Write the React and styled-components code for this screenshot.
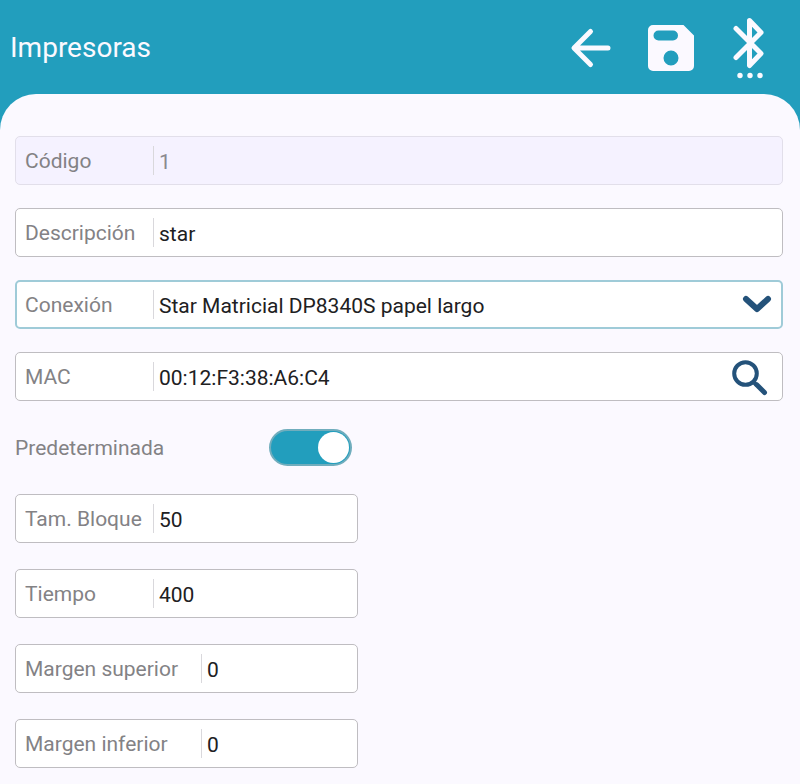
import React, { useState } from "react";
import styled, { createGlobalStyle } from "styled-components";

const GlobalStyle = createGlobalStyle`
  * {
    box-sizing: border-box;
  }

  body {
    margin: 0;
    background: #229ebd;
    font-family: Roboto, "Liberation Sans", sans-serif;
  }
`;

const Page = styled.div`
  min-height: 100vh;
  display: flex;
  flex-direction: column;
`;

const Header = styled.header`
  height: 94px;
  padding: 2px 34px 0 10px;
  display: flex;
  align-items: center;
  justify-content: space-between;
  color: #fbf9ff;
`;

const Title = styled.h1`
  margin: 0;
  font-size: 28px;
  font-weight: 400;
  line-height: 32px;
`;

const Actions = styled.div`
  display: flex;
  align-items: center;
  gap: 36px;
`;

const IconButton = styled.button`
  display: flex;
  padding: 0;
  border: none;
  background: none;
  color: inherit;
  cursor: pointer;

  svg {
    display: block;
  }
`;

const Panel = styled.form`
  flex: 1;
  display: flex;
  flex-direction: column;
  gap: 23px;
  padding: 42px 17px 16px 15px;
  border-radius: 36px 36px 0 0;
  background: #fbf9ff;
`;

const FieldBox = styled.div`
  height: 49px;
  display: flex;
  align-items: center;
  padding-right: ${(props) => (props.$end || 8)}px;
  border: 2px solid ${(props) => (props.$active ? "#9fcbd8" : "#bfbdc1")};
  border-width: ${(props) => (props.$active ? "2px" : "1px")};
  padding-left: ${(props) => (props.$active ? "8px" : "9px")};
  border-radius: 5px;
  background: #fff;

  ${(props) => props.$disabled && `
    border-color: #e2dfea;
    background: #f5f2ff;
  `}
`;

const Label = styled.label`
  flex: none;
  width: ${(props) => (props.$wide ? "176px" : "128px")};
  color: #838285;
  font-size: 21px;
  line-height: 28px;
  white-space: nowrap;
`;

const Input = styled.input`
  flex: 1;
  min-width: 0;
  height: 29px;
  padding: 2px 0 0 5px;
  border: none;
  border-left: 1px solid #d9d8dc;
  border-radius: 0;
  outline: none;
  background: transparent;
  color: #202022;
  font: 400 21px Roboto, "Liberation Sans", sans-serif;

  &:disabled {
    color: #8b898f;
  }
`;

const Select = styled(Input).attrs({ as: "select" })`
  appearance: none;
`;

const Chevron = styled.svg`
  flex: none;
  pointer-events: none;
`;

const SwitchRow = styled.div`
  display: flex;
  align-items: center;
  height: 47px;
`;

const SwitchLabel = styled(Label)`
  width: 254px;
`;

const Switch = styled.input`
  appearance: none;
  display: flex;
  align-items: center;
  justify-content: ${(props) => (props.checked ? "flex-end" : "flex-start")};
  width: 83px;
  height: 37px;
  margin: 0;
  padding: 0 1px;
  border: 2px solid #70adbd;
  border-radius: 19px;
  background: ${(props) => (props.checked ? "#229ebd" : "#c9c7cb")};
  cursor: pointer;

  &::before {
    content: "";
    width: 31px;
    height: 31px;
    border-radius: 50%;
    background: #fff;
  }
`;

const Settings = styled.div`
  display: grid;
  grid-template-columns: minmax(0, 1fr) minmax(0, 1fr);
  column-gap: 82px;
  row-gap: 26px;

  > * {
    grid-column: 1;
  }
`;

const BackIcon = () => (
  <svg width="42" height="42" viewBox="0 0 42 42" fill="none" stroke="currentColor" strokeWidth="5" strokeLinecap="round" strokeLinejoin="round">
    <path d="M20.5 4.5L4 21l16.5 16.5M4.5 21H38" />
  </svg>
);

const SaveIcon = () => (
  <svg width="46" height="46" viewBox="0 0 46 46" fill="currentColor">
    <path
      fillRule="evenodd"
      d="M5 0H35.5L46 10.5V41a5 5 0 0 1-5 5H5a5 5 0 0 1-5-5V5a5 5 0 0 1 5-5ZM10.5 5.5a5 5 0 0 0 0 10H25a5 5 0 0 0 0-10ZM23 25.5a7.5 7.5 0 1 0 0 15a7.5 7.5 0 1 0 0-15Z"
    />
  </svg>
);

const BluetoothIcon = () => (
  <svg width="36" height="66" viewBox="0 0 36 66" fill="none">
    <path
      d="M6 13.5L31 38.5L19.5 50.5V5.5L31 17.5L6 42.5"
      stroke="currentColor"
      strokeWidth="5"
      strokeLinecap="round"
      strokeLinejoin="round"
    />
    <g fill="currentColor">
      <circle cx="10" cy="60.5" r="2.7" />
      <circle cx="20" cy="60.5" r="2.7" />
      <circle cx="30" cy="60.5" r="2.7" />
    </g>
  </svg>
);

const SearchIcon = () => (
  <svg width="38" height="38" viewBox="0 0 38 38" fill="none" stroke="#24527a" strokeLinecap="round">
    <circle cx="15.5" cy="15.5" r="11.3" strokeWidth="4" />
    <path d="M24 24.5L26 26.5" strokeWidth="4" />
    <path d="M27 27L34.5 34.5" strokeWidth="5" />
  </svg>
);

const Field = ({ id, label, wide, value, disabled, end, children }) => (
  <FieldBox $disabled={disabled} $end={end}>
    <Label htmlFor={id} $wide={wide}>{label}</Label>
    <Input id={id} defaultValue={value} disabled={disabled} />
    {children}
  </FieldBox>
);

const App = () => {
  const [isDefault, setIsDefault] = useState(true);

  return (
    <Page>
      <GlobalStyle />
      <Header>
        <Title>Impresoras</Title>
        <Actions>
          <IconButton type="button" aria-label="Volver"><BackIcon /></IconButton>
          <IconButton type="button" aria-label="Guardar"><SaveIcon /></IconButton>
          <IconButton type="button" aria-label="Bluetooth"><BluetoothIcon /></IconButton>
        </Actions>
      </Header>
      <Panel onSubmit={(e) => e.preventDefault()}>
        <Field id="codigo" label="Código" value="1" disabled />
        <Field id="descripcion" label="Descripción" value="star" />
        <FieldBox $active $end={8}>
          <Label htmlFor="conexion">Conexión</Label>
          <Select id="conexion" defaultValue="star">
            <option value="star">Star Matricial DP8340S papel largo</option>
          </Select>
          <Chevron width="32" height="24" viewBox="0 0 32 24" fill="none" stroke="#24527a" strokeWidth="6" strokeLinecap="round" strokeLinejoin="round">
            <path d="M5 6L16 16L27 6" />
          </Chevron>
        </FieldBox>
        <Field id="mac" label="MAC" value="00:12:F3:38:A6:C4" end={14}>
          <IconButton type="button" aria-label="Buscar"><SearchIcon /></IconButton>
        </Field>
        <SwitchRow>
          <SwitchLabel htmlFor="predeterminada">Predeterminada</SwitchLabel>
          <Switch
            id="predeterminada"
            type="checkbox"
            checked={isDefault}
            onChange={(e) => setIsDefault(e.target.checked)}
          />
        </SwitchRow>
        <Settings>
          <Field id="bloque" label="Tam. Bloque" value="50" />
          <Field id="tiempo" label="Tiempo" value="400" />
          <Field id="superior" label="Margen superior" value="0" wide />
          <Field id="inferior" label="Margen inferior" value="0" wide />
        </Settings>
      </Panel>
    </Page>
  );
};

export default App;
